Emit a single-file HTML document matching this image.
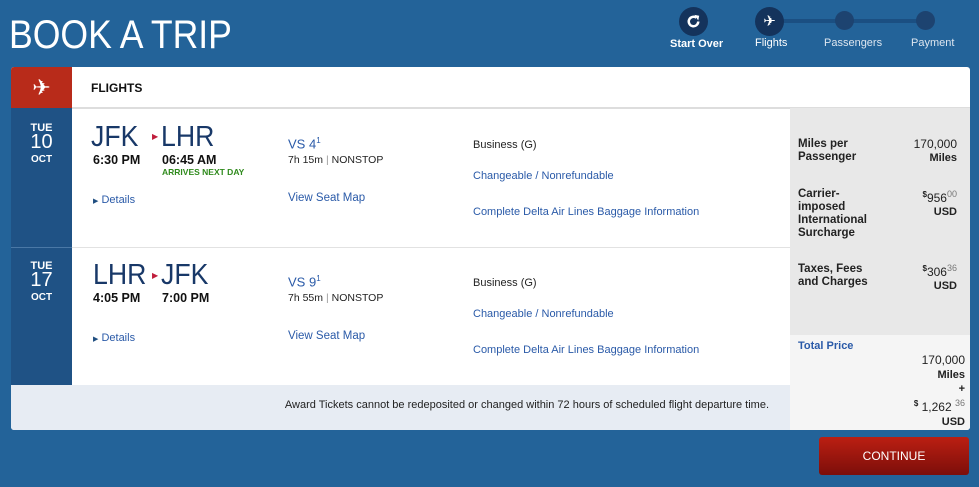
<!DOCTYPE html>
<html><head><style>
*{margin:0;padding:0;box-sizing:border-box}
body{width:979px;height:487px;background:#236399;font-family:"Liberation Sans",sans-serif;position:relative;overflow:hidden;color:#222}
.a{position:absolute}
.t{color:#fff;font-size:40px;left:9px;top:13px;transform:scaleX(0.89);transform-origin:left}
.card{left:11px;top:67px;width:959px;height:363px;background:#fff;border-radius:3px;overflow:hidden}
.lnk{color:#2a5aa8;font-size:11px}
.big{font-size:29px;color:#183868;transform:scaleX(0.92);transform-origin:left}
.tm{font-size:12.5px;font-weight:bold;color:#111}
.dt{color:#fff;text-align:center;width:61px;font-weight:bold}
.lb{font-size:11.5px;font-weight:bold;color:#222;line-height:13px}
.r{text-align:right;right:12px;font-size:11px;font-weight:bold;line-height:13px}
</style></head><body>
<div class="a t">BOOK A TRIP</div>
<!-- stepper -->
<div class="a" style="left:783px;top:19px;width:143px;height:4px;background:#1b4f82"></div>
<div class="a" style="left:679px;top:7px;width:29px;height:29px;border-radius:50%;background:#14335c"></div>
<svg class="a" style="left:684px;top:12px" width="19" height="19" viewBox="0 0 20 20"><path d="M15 10a5 5 0 1 1-2-4" fill="none" stroke="#fff" stroke-width="2.6"/><path d="M11 3l5 1-1 5z" fill="#fff"/></svg>
<div class="a" style="left:755px;top:7px;width:29px;height:29px;border-radius:50%;background:#14335c;color:#fff;font-size:15px;text-align:center;line-height:29px">✈</div>
<div class="a" style="left:835px;top:11px;width:19px;height:19px;border-radius:50%;background:#1d4370"></div>
<div class="a" style="left:916px;top:11px;width:19px;height:19px;border-radius:50%;background:#1d4370"></div>
<div class="a" style="left:670px;top:38px;color:#fff;font-size:11px;font-weight:bold">Start Over</div>
<div class="a" style="left:755px;top:37px;color:#fff;font-size:11px">Flights</div>
<div class="a" style="left:824px;top:37px;color:#dde6f0;font-size:11px">Passengers</div>
<div class="a" style="left:911px;top:37px;color:#dde6f0;font-size:11px">Payment</div>

<div class="a card">
 <div class="a" style="left:0;top:0;width:61px;height:41px;background:#b82b1a;color:#fff;font-size:22px;text-align:center;line-height:41px">✈</div>
 <div class="a" style="left:80px;top:14px;font-size:12px;font-weight:bold;color:#111">FLIGHTS</div>
 <div class="a" style="left:61px;top:40px;width:898px;height:2px;background:#ddd"></div>
 <div class="a" style="left:0;top:41px;width:61px;height:277px;background:#1f5285"></div>
 <div class="a" style="left:0;top:180px;width:61px;height:1px;background:#4a78a6"></div>
 <div class="a" style="left:61px;top:180px;width:718px;height:1px;background:#e2e2e2"></div>
 <div class="a" style="left:779px;top:41px;width:180px;height:227px;background:#e8e8e8"></div>
 <div class="a" style="left:779px;top:268px;width:180px;height:95px;background:#f5f5f5"></div>
 <div class="a" style="left:0;top:318px;width:779px;height:45px;background:#e7ecf3"></div>
 <div class="a" style="left:0;top:332px;width:758px;text-align:right;font-size:11px;color:#222">Award Tickets cannot be redeposited or changed within 72 hours of scheduled flight departure time.</div>

 <!-- row1 -->
 <div class="a dt" style="top:55px;font-size:11px">TUE</div>
 <div class="a dt" style="top:64px;font-size:20px;font-weight:normal">10</div>
 <div class="a dt" style="top:87px;font-size:10px">OCT</div>
 <div class="a big" style="left:80px;top:54px">JFK</div>
 <div class="a" style="left:141px;top:65px;color:#c01d3c;font-size:8px">▶</div>
 <div class="a big" style="left:150px;top:54px">LHR</div>
 <div class="a tm" style="left:82px;top:86px">6:30 PM</div>
 <div class="a tm" style="left:151px;top:86px">06:45 AM</div>
 <div class="a" style="left:151px;top:100px;font-size:8.5px;font-weight:bold;color:#2f8a1c">ARRIVES NEXT DAY</div>
 <div class="a lnk" style="left:82px;top:127px"><span style="font-size:7px;color:#1f4e80">▶</span> Details</div>
 <div class="a" style="left:277px;top:69px;color:#2a5aa8;font-size:13px">VS 4<sup style="font-size:8px">1</sup></div>
 <div class="a" style="left:277px;top:87px;font-size:10.5px">7h 15m <span style="color:#999">|</span> NONSTOP</div>
 <div class="a lnk" style="left:277px;top:125px;font-size:11.5px">View Seat Map</div>
 <div class="a" style="left:462px;top:72px;font-size:11px">Business (G)</div>
 <div class="a lnk" style="left:462px;top:103px">Changeable / Nonrefundable</div>
 <div class="a lnk" style="left:462px;top:139px">Complete Delta Air Lines Baggage Information</div>

 <!-- row2 -->
 <div class="a dt" style="top:193px;font-size:11px">TUE</div>
 <div class="a dt" style="top:202px;font-size:20px;font-weight:normal">17</div>
 <div class="a dt" style="top:225px;font-size:10px">OCT</div>
 <div class="a big" style="left:82px;top:192px">LHR</div>
 <div class="a" style="left:141px;top:204px;color:#c01d3c;font-size:8px">▶</div>
 <div class="a big" style="left:150px;top:192px">JFK</div>
 <div class="a tm" style="left:82px;top:224px">4:05 PM</div>
 <div class="a tm" style="left:151px;top:224px">7:00 PM</div>
 <div class="a lnk" style="left:82px;top:265px"><span style="font-size:7px;color:#1f4e80">▶</span> Details</div>
 <div class="a" style="left:277px;top:207px;color:#2a5aa8;font-size:13px">VS 9<sup style="font-size:8px">1</sup></div>
 <div class="a" style="left:277px;top:225px;font-size:10.5px">7h 55m <span style="color:#999">|</span> NONSTOP</div>
 <div class="a lnk" style="left:277px;top:263px;font-size:11.5px">View Seat Map</div>
 <div class="a" style="left:462px;top:210px;font-size:11px">Business (G)</div>
 <div class="a lnk" style="left:462px;top:241px">Changeable / Nonrefundable</div>
 <div class="a lnk" style="left:462px;top:277px">Complete Delta Air Lines Baggage Information</div>

 <!-- prices -->
 <div class="a lb" style="left:787px;top:71px">Miles per<br>Passenger</div>
 <div class="a r" style="right:13px;top:71px"><span style="font-weight:normal;font-size:12px">170,000</span><br>Miles</div>
 <div class="a lb" style="left:787px;top:121px">Carrier-<br>imposed<br>International<br>Surcharge</div>
 <div class="a r" style="right:13px;top:121px"><span style="font-size:12px;font-weight:normal"><sup style="font-size:8px;font-weight:bold">$</sup>956<sup style="font-size:9px;color:#777">00</sup></span><br>USD</div>
 <div class="a lb" style="left:787px;top:196px">Taxes, Fees<br>and Charges</div>
 <div class="a r" style="right:13px;top:195px"><span style="font-size:12px;font-weight:normal"><sup style="font-size:8px;font-weight:bold">$</sup>306<sup style="font-size:9px;color:#777">36</sup></span><br>USD</div>
 <div class="a" style="left:787px;top:273px;color:#2a5aa8;font-size:11px;font-weight:bold">Total Price</div>
 <div class="a r" style="right:5px;top:286px;line-height:14px"><span style="font-weight:normal;font-size:12px">170,000</span><br>Miles<br>+<br><span style="font-weight:normal;font-size:12px"><sup style="font-size:8px;font-weight:bold">$</sup> 1,262 <sup style="font-size:9px;color:#777">36</sup></span><br>USD</div>
</div>
<div class="a" style="left:819px;top:437px;width:150px;height:38px;border-radius:3px;background:linear-gradient(#bb1f12,#7c0e0a);color:#fff;font-size:12px;text-align:center;line-height:38px">CONTINUE</div>
</body></html>
